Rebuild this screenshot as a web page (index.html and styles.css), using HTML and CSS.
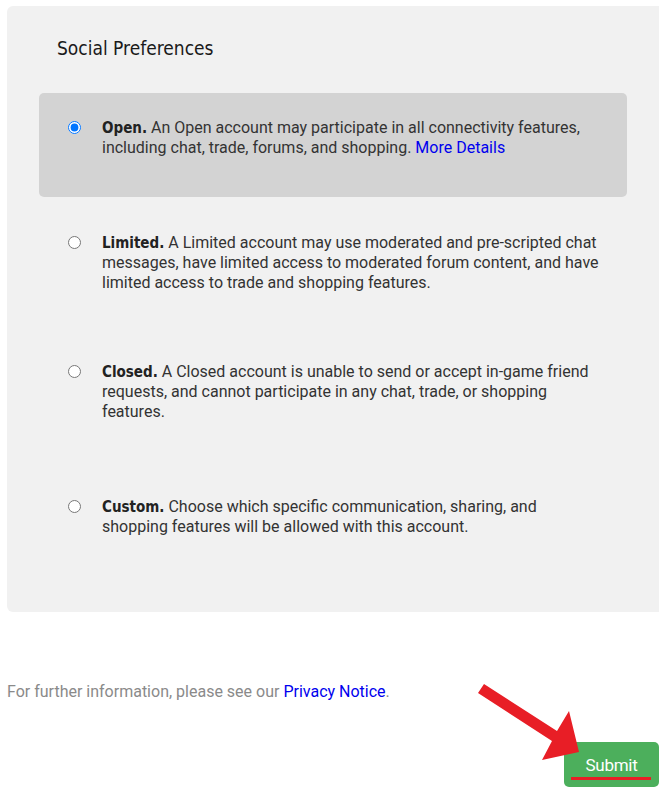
FILE: index.html
```html
<!DOCTYPE html>
<html lang="en">
<head>
    <meta charset="UTF-8">
    <meta name="viewport" content="width=device-width, initial-scale=1.0">
    <title>Social Preferences</title>
    <link rel="stylesheet" href="styles.css">
</head>
<body>

    <div class="page">
        <div class="panel">
            <h2>Social Preferences</h2>
            <form class="options">
                <label class="option selected">
                    <input type="radio" name="social" value="open" checked>
                    <span class="desc"><strong>Open.</strong> An Open account may participate in all connectivity features, including chat, trade, forums, and shopping. <a href="#">More Details</a></span>
                </label>
                <label class="option opt-limited">
                    <input type="radio" name="social" value="limited">
                    <span class="desc"><strong>Limited.</strong> A Limited account may use moderated and pre-scripted chat messages, have limited access to moderated forum content, and have limited access to trade and shopping features.</span>
                </label>
                <label class="option opt-closed">
                    <input type="radio" name="social" value="closed">
                    <span class="desc"><strong>Closed.</strong> A Closed account is unable to send or accept in-game friend requests, and cannot participate in any chat, trade, or shopping features.</span>
                </label>
                <label class="option opt-custom">
                    <input type="radio" name="social" value="custom">
                    <span class="desc"><strong>Custom.</strong> Choose which specific communication, sharing, and shopping features will be allowed with this account.</span>
                </label>
            </form>
        </div>

        <p class="notice">For further information, please see our <a href="#">Privacy Notice</a>.</p>

        <div class="actions">
            <button type="button" class="submit">Submit</button>
            <!-- red marker pointing at the button -->
            <svg class="marker" width="200" height="120" viewBox="460 680 200 120">
                <polygon points="484,684 557,731 569,711 579,752 542,760 552,741 478,693" fill="#e81e26"/>
                <rect x="571" y="777" width="80" height="3" fill="#e81e26"/>
            </svg>
        </div>
    </div>

</body>
</html>
```

FILE: styles.css
```css
body {
    margin: 0;
    background-color: #fff;
    font-family: Roboto, "Noto Sans", sans-serif;
    font-size: 16px;
    color: #333;
}
.page {
    position: relative;
    padding: 6px 8px 0 7px;
}
.panel {
    background-color: #f1f1f1;
    border-radius: 6px 0 0 6px;
    height: 606px;
    padding: 30px 32px 0 32px;
    box-sizing: border-box;
}
h2 {
    margin: 0 0 33px 18px;
    font-family: "DejaVu Sans Condensed", "DejaVu Sans", sans-serif;
    font-weight: normal;
    font-size: 19px;
    line-height: 24px;
    color: #1a1a1a;
}
.options {
    display: flex;
    flex-direction: column;
}
.option {
    display: flex;
    align-items: flex-start;
    gap: 21px;
    padding: 25px 26px 39px 29px;
    border-radius: 5px;
    line-height: 20px;
}
.option.selected {
    background-color: #d3d3d3;
}
.opt-limited {
    margin-top: 11px;
}
.opt-closed {
    padding-top: 30px;
}
.opt-custom {
    padding-top: 36px;
}
.option input {
    margin: 3px 0 0 0;
    width: 13px;
    height: 13px;
    flex-shrink: 0;
}
.desc {
    max-width: 500px;
}
.desc strong {
    font-family: "DejaVu Sans Condensed", "DejaVu Sans", sans-serif;
    font-weight: bold;
    font-size: 15px;
    color: #222;
}
.desc a,
.notice a {
    color: #0000ee;
    text-decoration: none;
}
.notice {
    margin: 70px 0 0 0;
    line-height: 20px;
    color: #8a8a8a;
}
.actions {
    display: flex;
    justify-content: flex-end;
    margin-top: 40px;
}
.submit {
    width: 95px;
    height: 45px;
    border: none;
    border-radius: 5px;
    background-color: #4caf5c;
    color: #fff;
    font-family: Roboto, sans-serif;
    font-size: 17px;
    letter-spacing: -0.3px;
    cursor: pointer;
}
.marker {
    position: absolute;
    left: 460px;
    top: 680px;
    pointer-events: none;
}
```
